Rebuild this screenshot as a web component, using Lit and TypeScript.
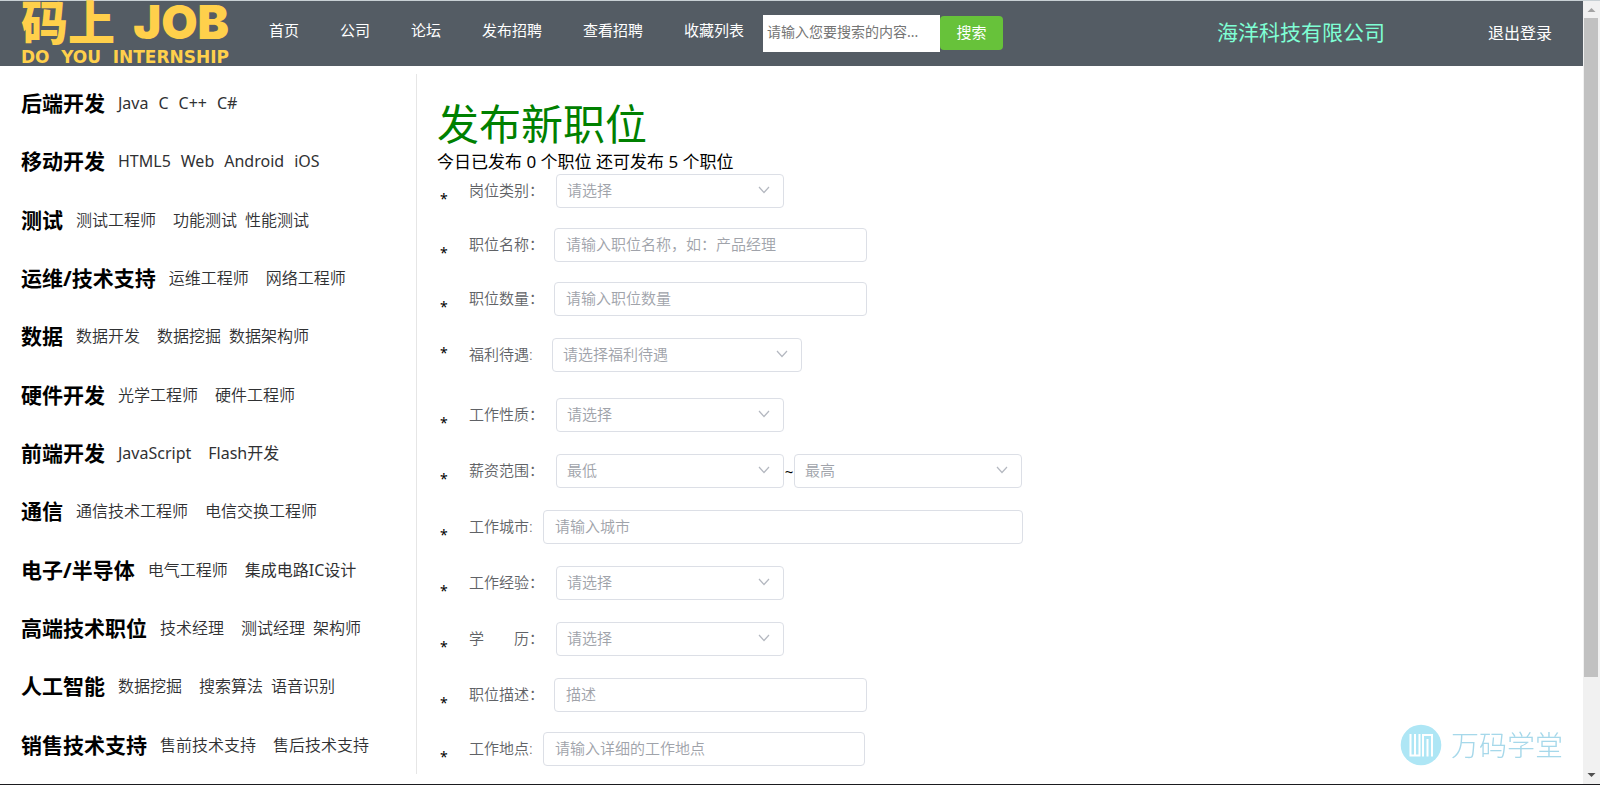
import { LitElement, html, css, nothing } from "lit";
import { customElement } from "lit/decorators.js";
import { classMap } from "lit/directives/class-map.js";

type Category = { title: string; jobs: string[]; compact?: boolean };

type Field = {
  id: string;
  label: string;
  kind: "select" | "input";
  hint: string;
  second?: string;
  labelSize: "full" | "mid" | "half" | "short";
  size: "small" | "medium" | "large" | "wide" | "place";
  space?: "tight" | "loose";
  starHigh?: boolean;
};

const NAV = ["首页", "公司", "论坛", "发布招聘", "查看招聘", "收藏列表"];

const CATEGORIES: Category[] = [
  { title: "后端开发", jobs: ["Java", "C", "C++", "C#"], compact: true },
  { title: "移动开发", jobs: ["HTML5", "Web", "Android", "iOS"], compact: true },
  { title: "测试", jobs: ["测试工程师", "功能测试", "性能测试"] },
  { title: "运维/技术支持", jobs: ["运维工程师", "网络工程师"] },
  { title: "数据", jobs: ["数据开发", "数据挖掘", "数据架构师"] },
  { title: "硬件开发", jobs: ["光学工程师", "硬件工程师"] },
  { title: "前端开发", jobs: ["JavaScript", "Flash开发"] },
  { title: "通信", jobs: ["通信技术工程师", "电信交换工程师"] },
  { title: "电子/半导体", jobs: ["电气工程师", "集成电路IC设计"] },
  { title: "高端技术职位", jobs: ["技术经理", "测试经理", "架构师"] },
  { title: "人工智能", jobs: ["数据挖掘", "搜索算法", "语音识别"] },
  { title: "销售技术支持", jobs: ["售前技术支持", "售后技术支持"] },
];

const FIELDS: Field[] = [
  { id: "category", label: "岗位类别：", kind: "select", hint: "请选择", labelSize: "full", size: "small", space: "tight" },
  { id: "name", label: "职位名称：", kind: "input", hint: "请输入职位名称，如：产品经理", labelSize: "mid", size: "large", space: "tight" },
  { id: "count", label: "职位数量：", kind: "input", hint: "请输入职位数量", labelSize: "mid", size: "large" },
  { id: "welfare", label: "福利待遇:", kind: "select", hint: "请选择福利待遇", labelSize: "half", size: "medium", space: "loose", starHigh: true },
  { id: "nature", label: "工作性质：", kind: "select", hint: "请选择", labelSize: "full", size: "small" },
  { id: "salary", label: "薪资范围：", kind: "select", hint: "最低", second: "最高", labelSize: "full", size: "small" },
  { id: "city", label: "工作城市:", kind: "input", hint: "请输入城市", labelSize: "short", size: "wide" },
  { id: "experience", label: "工作经验：", kind: "select", hint: "请选择", labelSize: "full", size: "small" },
  { id: "degree", label: "学\u3000\u3000历：", kind: "select", hint: "请选择", labelSize: "full", size: "small" },
  { id: "description", label: "职位描述：", kind: "input", hint: "描述", labelSize: "mid", size: "large", space: "tight" },
  { id: "place", label: "工作地点:", kind: "input", hint: "请输入详细的工作地点", labelSize: "short", size: "place" },
];

@customElement("site-header")
export class SiteHeader extends LitElement {
  static styles = css`
    :host { display: block; }
    .bar { display: flex; align-items: center; height: 65px; padding: 0 31px 0 21px; background: #545c64; white-space: nowrap; }
    .logo { display: flex; flex-direction: column; gap: 4px; flex: none; width: 208px; color: #ffd04b; text-decoration: none; }
    .logo-name { display: flex; align-items: center; justify-content: space-between; height: 42px; font-size: 47px; line-height: 42px; font-weight: 900; }
    .logo-latin { font-family: Inter, sans-serif; font-size: 47px; }
    .logo-sub { display: flex; justify-content: space-between; padding-top: 2px; font: 700 17px/17px "DejaVu Sans", sans-serif; }
    .nav { display: flex; gap: 41px; margin: 0 19px 8px 40px; font-size: 15px; }
    .nav-link { color: #fff; text-decoration: none; }
    .search { display: flex; align-items: center; padding-bottom: 1px; }
    .search-box { box-sizing: border-box; width: 177px; height: 37px; padding: 0 4px 3px; border: 0; font: inherit; font-size: 14px; background: #fff; }
    .search-box::placeholder { color: #757575; opacity: 1; }
    .search-button { width: 63px; height: 34px; padding: 0 0 3px; border: 0; border-radius: 4px; background: #67c23a; color: #fff; font: inherit; font-size: 15px; }
    .company { margin: 0 0 5px auto; color: #7fffd4; font-size: 21px; text-decoration: none; }
    .logout { margin: 0 0 4px 103px; color: #fff; font-size: 16px; text-decoration: none; }
  `;

  render() {
    return html`
      <header class="bar">
        <a class="logo" href="#">
          <span class="logo-name"><span>码上</span><span class="logo-latin">JOB</span></span>
          <span class="logo-sub"><span>DO</span> <span>YOU</span> <span>INTERNSHIP</span></span>
        </a>
        <nav class="nav">${NAV.map((n) => html`<a class="nav-link" href="#">${n}</a>`)}</nav>
        <form class="search" @submit=${(e: Event) => e.preventDefault()}>
          <input class="search-box" type="text" aria-label="搜索" placeholder="请输入您要搜索的内容..." />
          <button class="search-button" type="submit">搜索</button>
        </form>
        <a class="company" href="#">海洋科技有限公司</a>
        <a class="logout" href="#">退出登录</a>
      </header>
    `;
  }
}

@customElement("job-categories")
export class JobCategories extends LitElement {
  static styles = css`
    :host { display: block; }
    .list { display: grid; grid-auto-rows: 1fr; height: 100%; box-sizing: border-box; margin: 0; padding: 0 0 0 21px; list-style: none; border-right: 1px solid #e6e6e6; }
    .row { display: flex; align-items: center; white-space: nowrap; }
    .title { margin: 0 13px 0 0; font-size: 21px; line-height: 30px; font-weight: 700; color: #000; }
    .job { margin-right: 8px; font-size: 16px; line-height: 30px; font-weight: 350; color: #303133; text-decoration: none; }
    .job.latin { margin-right: 10px; font-weight: 400; }
    .job.first { margin-right: 17px; }
  `;

  render() {
    return html`
      <ul class="list">
        ${CATEGORIES.map(
          (c) => html`<li class="row">
            <h3 class="title">${c.title}</h3>
            ${c.jobs.map(
              (j, i) => html`<a
                class=${classMap({ job: true, latin: /[A-Z]/i.test(j), first: i === 0 && !c.compact })}
                href="#"
                >${j}</a
              >`
            )}
          </li>`
        )}
      </ul>
    `;
  }
}

@customElement("job-form")
export class JobForm extends LitElement {
  static styles = css`
    :host { display: block; }
    .title { margin: 0; font-size: 42px; line-height: 56px; font-weight: 400; color: #008000; }
    .quota { margin: 0; padding-bottom: 2px; font-size: 17px; line-height: 20px; color: #000; }
    .field { display: flex; align-items: center; height: 34px; margin-bottom: 22px; font-size: 15px; }
    .field.tight { margin-bottom: 20px; }
    .field.loose { margin-bottom: 26px; }
    .star { flex: none; box-sizing: border-box; width: 29px; height: 34px; padding: 17px 0 0 3px; font-size: 14px; line-height: 16px; color: #000; }
    .star.high { padding-top: 7px; }
    .label { flex: none; margin-left: 3px; padding-bottom: 3px; color: #606266; font-weight: 350; }
    .label.full { width: 87px; }
    .label.mid { width: 85px; }
    .label.half { width: 83px; }
    .label.short { width: 74px; }
    .control { display: grid; align-items: center; }
    .small { width: 228px; }
    .medium { width: 250px; }
    .large { width: 313px; }
    .wide { width: 480px; }
    .place { width: 322px; }
    .box { grid-area: 1 / 1; box-sizing: border-box; width: 100%; height: 34px; margin: 0; padding: 0 11px 2px; border: 1px solid #dcdfe6; border-radius: 4px; background: #fff; color: #a0a3aa; font: inherit; font-weight: 350; appearance: none; outline: none; }
    select.box { padding: 0 30px 2px 10px; }
    .box::placeholder { color: #a0a3aa; opacity: 1; }
    .arrow { grid-area: 1 / 1; justify-self: end; width: 12px; height: 12px; margin: 0 14px 2px 0; pointer-events: none; }
    .tilde { width: 10px; text-align: center; color: #000; }
  `;

  private renderSelect(f: Field, hint: string, id: string) {
    return html`<div class="control ${f.size}">
      <select class="box" id=${id} aria-label=${id === f.id ? nothing : hint}>
        <option>${hint}</option>
      </select>
      <svg class="arrow" viewBox="0 0 12 12" aria-hidden="true">
        <path d="M1 3 L6 8.5 L11 3" fill="none" stroke="#b4b8c0" stroke-width="1.2" />
      </svg>
    </div>`;
  }

  private renderField(f: Field) {
    const row = { field: true, tight: f.space === "tight", loose: f.space === "loose" };
    return html`<div class=${classMap(row)}>
      <span class=${classMap({ star: true, high: !!f.starHigh })} aria-hidden="true">*</span>
      <label class="label ${f.labelSize}" for=${f.id}>${f.label}</label>
      ${f.kind === "select"
        ? this.renderSelect(f, f.hint, f.id)
        : html`<div class="control ${f.size}"><input class="box" id=${f.id} type="text" placeholder=${f.hint} /></div>`}
      ${f.second
        ? html`<span class="tilde">~</span>${this.renderSelect(f, f.second, f.id + "-max")}`
        : nothing}
    </div>`;
  }

  render() {
    return html`
      <h1 class="title">发布新职位</h1>
      <p class="quota">今日已发布 0 个职位 还可发布 5 个职位</p>
      <form>${FIELDS.map((f) => this.renderField(f))}</form>
    `;
  }
}

@customElement("page-scrollbar")
export class PageScrollbar extends LitElement {
  static styles = css`
    :host { display: flex; flex-direction: column; background: #f1f1f1; }
    .arrow { flex: none; width: 17px; height: 17px; }
    .track { flex: 1; padding: 0 2px 0 1px; }
    .thumb { height: 88%; background: #c1c1c1; }
  `;

  render() {
    return html`
      <svg class="arrow" viewBox="0 0 17 17"><path d="M4.5 11 L8.5 7 L12.5 11 Z" fill="#a3a3a3" /></svg>
      <div class="track"><div class="thumb"></div></div>
      <svg class="arrow" viewBox="0 0 17 17"><path d="M4.5 6 L8.5 10 L12.5 6 Z" fill="#505050" /></svg>
    `;
  }
}

@customElement("app-root")
export class AppRoot extends LitElement {
  static styles = css`
    :host { display: block; font-family: "Noto Sans", "Noto Sans CJK SC", sans-serif; }
    .window { display: grid; grid-template-columns: minmax(0, 1fr) 17px; box-sizing: border-box; min-height: 100vh; border-top: 1px solid #c8d0d4; border-bottom: 1px solid #1b1b1f; background: #fff; }
    .page { display: flex; flex-direction: column; }
    .body { display: flex; flex: 1; padding: 8px 0 10px; }
    .side { flex: none; width: 417px; }
    .main { flex: 1; min-width: 0; margin: 22px 0 -20px 20px; }
    .watermark { position: fixed; right: 37px; bottom: 19px; display: flex; align-items: center; gap: 9px; color: #a6d8ea; font-size: 28px; line-height: 40px; font-weight: 300; }
    .mark { width: 42px; height: 42px; }
  `;

  render() {
    return html`
      <div class="window">
        <div class="page">
          <site-header></site-header>
          <div class="body">
            <job-categories class="side"></job-categories>
            <job-form class="main"></job-form>
          </div>
        </div>
        <page-scrollbar></page-scrollbar>
      </div>
      <div class="watermark">
        <svg class="mark" viewBox="0 0 42 42" aria-hidden="true">
          <circle cx="21" cy="21" r="20.3" fill="#aee6f5" />
          <path
            d="M10.500 10 V31.500 H19.500 V10 M15 10 V31.500 M23 32.500 V11 H32 V32.500 M27.500 15 V32.500"
            fill="none"
            stroke="#fff"
            stroke-width="2"
          />
        </svg>
        <span>万码学堂</span>
      </div>
    `;
  }
}
